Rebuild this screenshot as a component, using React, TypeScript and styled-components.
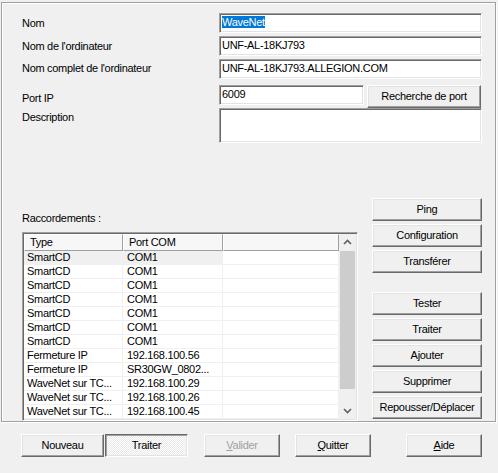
import React from "react";
import styled, { createGlobalStyle, css } from "styled-components";

type Connection = { type: string; port: string };

const CONNECTIONS: Connection[] = [
  { type: "SmartCD", port: "COM1" },
  { type: "SmartCD", port: "COM1" },
  { type: "SmartCD", port: "COM1" },
  { type: "SmartCD", port: "COM1" },
  { type: "SmartCD", port: "COM1" },
  { type: "SmartCD", port: "COM1" },
  { type: "SmartCD", port: "COM1" },
  { type: "Fermeture IP", port: "192.168.100.56" },
  { type: "Fermeture IP", port: "SR30GW_0802..." },
  { type: "WaveNet sur TC...", port: "192.168.100.29" },
  { type: "WaveNet sur TC...", port: "192.168.100.26" },
  { type: "WaveNet sur TC...", port: "192.168.100.45" },
];

const SIDE_TOP = ["Ping", "Configuration", "Transférer"];
const SIDE_BOTTOM = ["Tester", "Traiter", "Ajouter", "Supprimer", "Repousser/Déplacer"];

const GlobalStyle = createGlobalStyle`
  html, body {
    margin: 0;
    background: #f0f0f0;
  }
  body {
    font-family: "Liberation Sans", Arial, sans-serif;
    font-size: 11px;
    letter-spacing: -0.3px;
    color: #000;
  }
`;

// classic 3D edges
const raised = css`
  border: 1px solid;
  border-color: #fff #696969 #696969 #fff;
  box-shadow: inset -1px -1px 0 #a0a0a0, inset 1px 1px 0 #e3e3e3;
`;

const sunken = css`
  border: 1px solid;
  border-color: #a0a0a0 #fff #fff #a0a0a0;
  box-shadow: inset 1px 1px 0 #696969, inset -1px -1px 0 #e3e3e3;
`;

const Chevron = ({ down }: { down?: boolean }) => (
  <svg width="17" height="17" viewBox="0 0 17 17">
    <path
      d={down ? "M5 7 L8.5 10.5 L12 7" : "M5 10 L8.5 6.5 L12 10"}
      fill="none"
      stroke="#606060"
      strokeWidth="1.6"
    />
  </svg>
);

const App = () => {
  return (
    <Page>
      <GlobalStyle />
      <Panel>
        <FormRow $mt={0}>
          <Label $pt={4}>Nom</Label>
          <Field>
            <Selected>WaveNet</Selected>
          </Field>
        </FormRow>
        <FormRow $mt={3}>
          <Label $pt={4}>Nom de l'ordinateur</Label>
          <Field>UNF-AL-18KJ793</Field>
        </FormRow>
        <FormRow $mt={3}>
          <Label $pt={3}>Nom complet de l'ordinateur</Label>
          <Field>UNF-AL-18KJ793.ALLEGION.COM</Field>
        </FormRow>
        <FormRow $mt={6}>
          <Label $pt={7}>Port IP</Label>
          <PortGroup>
            <Field>6009</Field>
            <Button $w={114}>Recherche de port</Button>
          </PortGroup>
        </FormRow>
        <FormRow $mt={0}>
          <Label $pt={3}>Description</Label>
          <Field $h={35} />
        </FormRow>

        <Lower>
          <LeftCol>
            <SectionLabel>Raccordements :</SectionLabel>
            <ListView>
              <ListBody>
                <HeaderRow>
                  <HeaderCell>Type</HeaderCell>
                  <HeaderCell>Port COM</HeaderCell>
                  <HeaderCell />
                </HeaderRow>
                {CONNECTIONS.map((c, i) => (
                  <Row key={i}>
                    <Cell $sel={i === 0}>{c.type}</Cell>
                    <Cell $sel={i === 0}>{c.port}</Cell>
                    <Cell />
                  </Row>
                ))}
              </ListBody>
              <ScrollBar>
                <ArrowBox>
                  <Chevron />
                </ArrowBox>
                <Thumb />
                <Track />
                <ArrowBox>
                  <Chevron down />
                </ArrowBox>
              </ScrollBar>
            </ListView>
          </LeftCol>
          <SideButtons>
            {SIDE_TOP.map((b) => (
              <Button key={b} $w={110}>
                {b}
              </Button>
            ))}
            <Spacer />
            {SIDE_BOTTOM.map((b) => (
              <Button key={b} $w={110}>
                {b}
              </Button>
            ))}
          </SideButtons>
        </Lower>
      </Panel>

      <BottomBar>
        <Button $w={83}>Nouveau</Button>
        <Button $w={83} $ml={1} $pressed>
          Traiter
        </Button>
        <Button $w={76} $ml={16} disabled>
          <u>V</u>alider
        </Button>
        <Button $w={76} $ml={15}>
          <u>Q</u>uitter
        </Button>
        <Button $w={76} $ml={35}>
          <u>A</u>ide
        </Button>
      </BottomBar>
    </Page>
  );
};

export default App;

const Page = styled.div`
  padding: 2px 0 0 1px;
`;

const Panel = styled.div`
  box-sizing: border-box;
  width: 495px;
  height: 420px;
  padding: 10px 13px 0 20px;
  border: 1px solid #a0a0a0;
  box-shadow: 1px 1px 0 #fff, inset 1px 1px 0 #fff;
`;

const FormRow = styled.div<{ $mt: number }>`
  display: grid;
  grid-template-columns: 197px 263px;
  align-items: start;
  margin-top: ${(p) => p.$mt}px;
`;

const Label = styled.div<{ $pt: number }>`
  line-height: 13px;
  padding-top: ${(p) => p.$pt}px;
  white-space: nowrap;
`;

const Field = styled.div<{ $h?: number }>`
  ${sunken};
  box-sizing: border-box;
  height: ${(p) => p.$h ?? 20}px;
  padding: 0 2px;
  background: #fff;
  line-height: 16px;
  white-space: nowrap;
  overflow: hidden;
`;

const Selected = styled.span`
  background: #0078d7;
  color: #fff;
`;

const PortGroup = styled.div`
  display: grid;
  grid-template-columns: 145px 114px;
  column-gap: 3px;
  align-items: start;
`;

const Button = styled.button<{ $w: number; $ml?: number; $pressed?: boolean }>`
  ${raised};
  box-sizing: border-box;
  width: ${(p) => p.$w}px;
  height: 23px;
  margin: 0 0 0 ${(p) => p.$ml ?? 0}px;
  padding: 0;
  background: #f0f0f0;
  font: inherit;
  font-weight: 400;
  letter-spacing: inherit;
  color: #000;
  line-height: 13px;
  white-space: nowrap;
  cursor: pointer;

  &:disabled {
    color: #a0a0a0;
    cursor: default;
  }

  ${(p) =>
    p.$pressed &&
    css`
      border-color: #696969 #fff #fff #696969;
      box-shadow: inset 1px 1px 0 #a0a0a0, inset -1px -1px 0 #e3e3e3;
      background: repeating-conic-gradient(#fff 0 25%, #e8e8e8 0 50%) 0 0 / 2px 2px;
    `}
`;

const Lower = styled.div`
  display: flex;
  gap: 14px;
  margin-top: 55px;
`;

const LeftCol = styled.div`
  width: 336px;
  padding-top: 14px;
`;

const SectionLabel = styled.div`
  line-height: 13px;
  margin-bottom: 7px;
`;

const ListView = styled.div`
  ${sunken};
  box-sizing: border-box;
  height: 189px;
  display: flex;
  padding: 1px;
  background: #fff;
  overflow: hidden;
`;

const ListBody = styled.div`
  flex: 1;
  display: flex;
  flex-direction: column;
  min-width: 0;
`;

const HeaderRow = styled.div`
  display: grid;
  grid-template-columns: 99px 100px 1fr;
  height: 17px;
`;

const HeaderCell = styled.div`
  box-sizing: border-box;
  border: 1px solid;
  border-color: #fff #a0a0a0 #a0a0a0 #fff;
  padding-left: 5px;
  line-height: 14px;
  background: #f7f7f7;
`;

const Row = styled.div`
  display: grid;
  grid-template-columns: 99px 100px 1fr;
  height: 14px;
  box-sizing: border-box;
  border-bottom: 1px solid #f0f0f0;
`;

const Cell = styled.div<{ $sel?: boolean }>`
  line-height: 13px;
  padding-left: 4px;
  border-right: 1px solid #f0f0f0;
  white-space: nowrap;
  overflow: hidden;
  background: ${(p) => (p.$sel ? "#f0f0f0" : "transparent")};

  &:first-child {
    padding-left: 3px;
  }
`;

const ScrollBar = styled.div`
  width: 17px;
  display: flex;
  flex-direction: column;
  background: #f0f0f0;
`;

const ArrowBox = styled.div`
  height: 17px;
  display: flex;
`;

const Thumb = styled.div`
  height: 138px;
  margin: 0 1px;
  background: #cdcdcd;
`;

const Track = styled.div`
  flex: 1;
`;

const SideButtons = styled.div`
  display: flex;
  flex-direction: column;
  gap: 3px;
`;

const Spacer = styled.div`
  height: 13px;
`;

const BottomBar = styled.div`
  display: flex;
  padding-left: 20px;
  margin-top: 12px;
`;
